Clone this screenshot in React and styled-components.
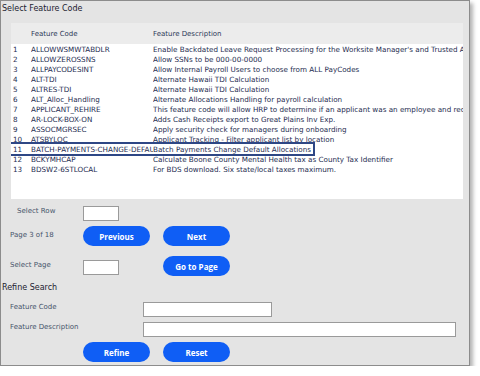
import React from 'react';
import styled, { createGlobalStyle } from 'styled-components';

const GlobalStyle = createGlobalStyle`
	* {
		box-sizing: border-box;
	}
	body {
		margin: 0;
		background: #fff;
		font-family: 'DejaVu Sans', Verdana, sans-serif;
	}
`;

const Panel = styled.div`
	width: 470px;
	height: 366px;
	background: #e4e4e4;
	border: 1px solid #8c8c8c;
	padding: 0 0 3px 1px;
	box-shadow: 3px 3px 4px rgba(0, 0, 0, 0.3);
`;

const Title = styled.div`
	height: ${(p) => p.$height}px;
	padding-top: ${(p) => p.$top || 0}px;
	margin-top: ${(p) => p.$margin || 0}px;
	font-size: 8px;
	line-height: ${(p) => p.$line || 14}px;
	color: #1c2230;
	white-space: nowrap;
`;

const Table = styled.div`
	margin-left: 9px;
	width: 452px;
	height: 176px;
	background: #fff;
	overflow: hidden;
`;

const Header = styled.div`
	display: flex;
	align-items: center;
	height: 21px;
	background: #ececec;
	font-size: 7px;
	color: #2c3a58;
`;

const Row = styled.div`
	display: flex;
	align-items: center;
	height: 10px;
	width: ${(p) => (p.$selected ? 'fit-content' : '100%')};
	font-size: 7.2px;
	color: #1e2c50;
	white-space: nowrap;
	outline: ${(p) => (p.$selected ? '2px solid #2e4785' : 'none')};
`;

const Num = styled.div`
	width: 20px;
	padding-left: 2px;
	flex: none;
`;

const Code = styled.div`
	width: 122px;
	padding-right: 2px;
	flex: none;
	overflow: hidden;
`;

const Desc = styled.div`
	flex: ${(p) => (p.$fit ? 'none' : 1)};
	padding-right: 2px;
	overflow: hidden;
`;

const FormRow = styled.div`
	display: flex;
	align-items: flex-start;
	height: ${(p) => p.$height}px;
	margin-top: ${(p) => p.$top}px;
`;

const Label = styled.div`
	width: ${(p) => p.$width}px;
	padding-left: ${(p) => p.$indent || 8}px;
	margin-top: ${(p) => p.$top || 0}px;
	flex: none;
	font-size: 7px;
	line-height: 10px;
	color: #46546b;
	white-space: nowrap;
`;

const Input = styled.input`
	width: ${(p) => p.$width}px;
	height: 15px;
	margin: ${(p) => p.$top || 0}px 0 0;
	padding: 0 2px;
	border: 1px solid #9a9a9a;
	background: #fff;
	flex: none;
`;

const Buttons = styled.div`
	display: flex;
	gap: 13px;
`;

const Button = styled.button`
	width: 67px;
	height: 20px;
	border: none;
	border-radius: 10px;
	background: #0f5ef5;
	color: #fff;
	font-family: 'Open Sans', sans-serif;
	font-weight: 700;
	font-size: 8px;
	padding: 0;
	cursor: pointer;
`;

const Spacer = styled.div`
	width: ${(p) => p.$width}px;
	flex: none;
`;

const rows = [
	['ALLOWWSMWTABDLR', "Enable Backdated Leave Request Processing for the Worksite Manager's and Trusted Advisor"],
	['ALLOWZEROSSNS', 'Allow SSNs to be 000-00-0000'],
	['ALLPAYCODESINT', 'Allow Internal Payroll Users to choose from ALL PayCodes'],
	['ALT-TDI', 'Alternate Hawaii TDI Calculation'],
	['ALTRES-TDI', 'Alternate Hawaii TDI Calculation'],
	['ALT_Alloc_Handling', 'Alternate Allocations Handling for payroll calculation'],
	['APPLICANT_REHIRE', 'This feature code will allow HRP to determine if an applicant was an employee and redirect'],
	['AR-LOCK-BOX-ON', 'Adds Cash Receipts export to Great Plains Inv Exp.'],
	['ASSOCMGRSEC', 'Apply security check for managers during onboarding'],
	['ATSBYLOC', 'Applicant Tracking - Filter applicant list by location'],
	['BATCH-PAYMENTS-CHANGE-DEFAULT', 'Batch Payments Change Default Allocations'],
	['BCKYMHCAP', 'Calculate Boone County Mental Health tax as County Tax Identifier'],
	['BDSW2-6STLOCAL', 'For BDS download. Six state/local taxes maximum.'],
];

const App = () => {
	return (
		<>
			<GlobalStyle />
			<Panel>
				<Title $height={22} $top={1}>Select Feature Code</Title>
				<Table>
					<Header>
						<Num />
						<Code>Feature Code</Code>
						<Desc>Feature Description</Desc>
					</Header>
					{rows.map(([code, desc], i) => (
						<Row key={code} $selected={i === 10}>
							<Num>{i + 1}</Num>
							<Code>{code}</Code>
							<Desc $fit={i === 10}>{desc}</Desc>
						</Row>
					))}
				</Table>

				<FormRow $height={15} $top={7}>
					<Label $width={81} $indent={15}>Select Row</Label>
					<Input $width={36} />
				</FormRow>
				<FormRow $height={20} $top={5}>
					<Label $width={81} $top={4}>Page 3 of 18</Label>
					<Buttons>
						<Button>Previous</Button>
						<Button>Next</Button>
					</Buttons>
				</FormRow>
				<FormRow $height={20} $top={10}>
					<Label $width={81} $top={4}>Select Page</Label>
					<Input $width={36} $top={4} />
					<Spacer $width={44} />
					<Button>Go to Page</Button>
				</FormRow>

				<Title $height={12} $margin={6} $line={12}>Refine Search</Title>

				<FormRow $height={15} $top={8}>
					<Label $width={141}>Feature Code</Label>
					<Input $width={129} />
				</FormRow>
				<FormRow $height={15} $top={5}>
					<Label $width={141}>Feature Description</Label>
					<Input $width={313} />
				</FormRow>
				<FormRow $height={20} $top={5}>
					<Spacer $width={81} />
					<Buttons>
						<Button>Refine</Button>
						<Button>Reset</Button>
					</Buttons>
				</FormRow>
			</Panel>
		</>
	);
};

export default App;
